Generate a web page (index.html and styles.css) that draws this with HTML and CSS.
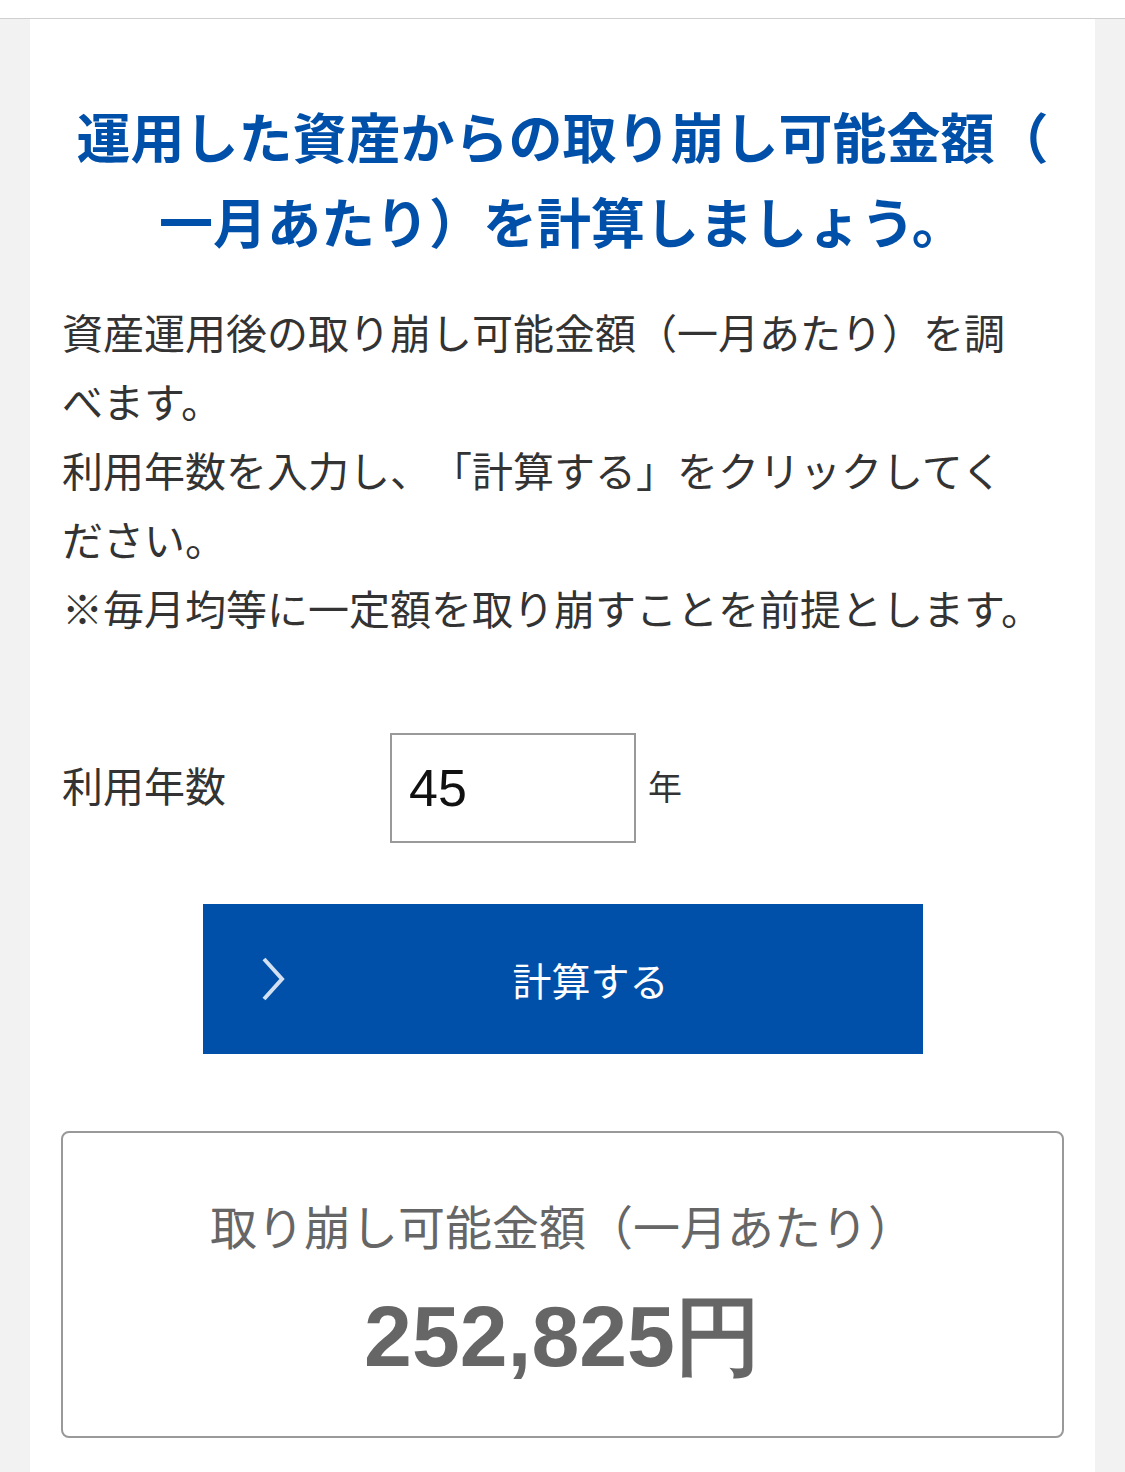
FILE: index.html
```html
<!DOCTYPE html>
<html lang="ja">
<head>
    <meta charset="UTF-8">
    <meta name="viewport" content="width=device-width, initial-scale=1.0">
    <title>取り崩し可能金額の計算</title>
    <link rel="stylesheet" href="styles.css">
</head>
<body>

    <header class="top-bar"></header>

    <main class="page">
        <section class="card">
            <h1 class="title">運用した資産からの取り崩し可能金額（一月あたり）を計算しましょう。</h1>

            <p class="desc">
                資産運用後の取り崩し可能金額（一月あたり）を調べます。<br>
                利用年数を入力し、「計算する」をクリックしてください。<br>
                <span class="nowrap">※毎月均等に一定額を取り崩すことを前提とします。</span>
            </p>

            <div class="form-row">
                <label class="form-label" for="years">利用年数</label>
                <input class="form-input" type="text" id="years" value="45">
                <span class="unit">年</span>
            </div>

            <button class="calc-btn" type="button">
                <svg class="chevron" width="26" height="46" viewBox="0 0 26 46">
                    <path d="M3 3 L21 23 L3 43" fill="none" stroke="#d2e0f2" stroke-width="4"/>
                </svg>
                <span class="calc-text">計算する</span>
            </button>

            <div class="result">
                <p class="result-label">取り崩し可能金額（一月あたり）</p>
                <p class="result-value">252,825円</p>
            </div>
        </section>
    </main>

</body>
</html>
```

FILE: styles.css
```css
/* ベース */
body {
    margin: 0;
    background-color: #f2f2f2;
    font-family: "Noto Sans CJK JP", "Noto Sans", sans-serif;
    color: #333;
    text-spacing-trim: space-all; /* 約物を詰めない */
}

.top-bar {
    height: 18px;
    background: #fff;
    border-bottom: 1px solid #cfcfcf;
}

.page {
    padding: 0 30px;
}

.card {
    background: #fff;
    padding: 74px 32px 40px;
    min-height: 1400px;
}

/* 見出し */
.title {
    margin: 0;
    font-size: 54px;
    line-height: 85px;
    font-weight: bold;
    color: #0050aa;
    text-align: center;
    line-break: anywhere;
}

/* 説明文 */
.desc {
    margin: 34px 0 0;
    padding-right: 30px;
    font-size: 41px;
    line-height: 69px;
    color: #333;
    line-break: anywhere;
}

.nowrap { white-space: nowrap; }

/* 入力フォーム */
.form-row {
    display: flex;
    align-items: center;
    margin-top: 91px;
}

.form-label {
    width: 328px;
    font-size: 41px;
    color: #333;
    margin-top: -8px;
}

.form-input {
    box-sizing: border-box;
    width: 246px;
    height: 110px;
    border: 2px solid #999;
    border-radius: 0;
    padding: 0 17px;
    font-family: "Liberation Sans", Arial, sans-serif;
    font-size: 52px;
    color: #111;
    outline: none;
}

.unit {
    margin-left: 12px;
    font-size: 34px;
    color: #333;
    margin-top: -6px;
}

/* 計算ボタン */
.calc-btn {
    display: flex;
    align-items: center;
    width: 720px;
    height: 150px;
    margin: 61px auto 0;
    padding: 0 0 0 58px;
    background-color: #0050aa;
    border: none;
    cursor: pointer;
    color: #fff;
    font-family: inherit;
}

.chevron { flex: none; }

.calc-text {
    flex: 1;
    text-align: center;
    font-size: 39px;
    padding-right: 28px;
}

/* 計算結果 */
.result {
    margin: 77px -1px 0;
    border: 2px solid #999;
    border-radius: 8px;
    height: 307px;
    box-sizing: border-box;
    padding-top: 62px;
    text-align: center;
    color: #666;
}

.result-label {
    margin: 0;
    font-size: 47px;
    line-height: 60px;
}

.result-value {
    margin: 36px 0 0;
    font-family: "Liberation Sans", Arial, sans-serif;
    font-size: 86px;
    line-height: 90px;
    font-weight: bold;
}
```
